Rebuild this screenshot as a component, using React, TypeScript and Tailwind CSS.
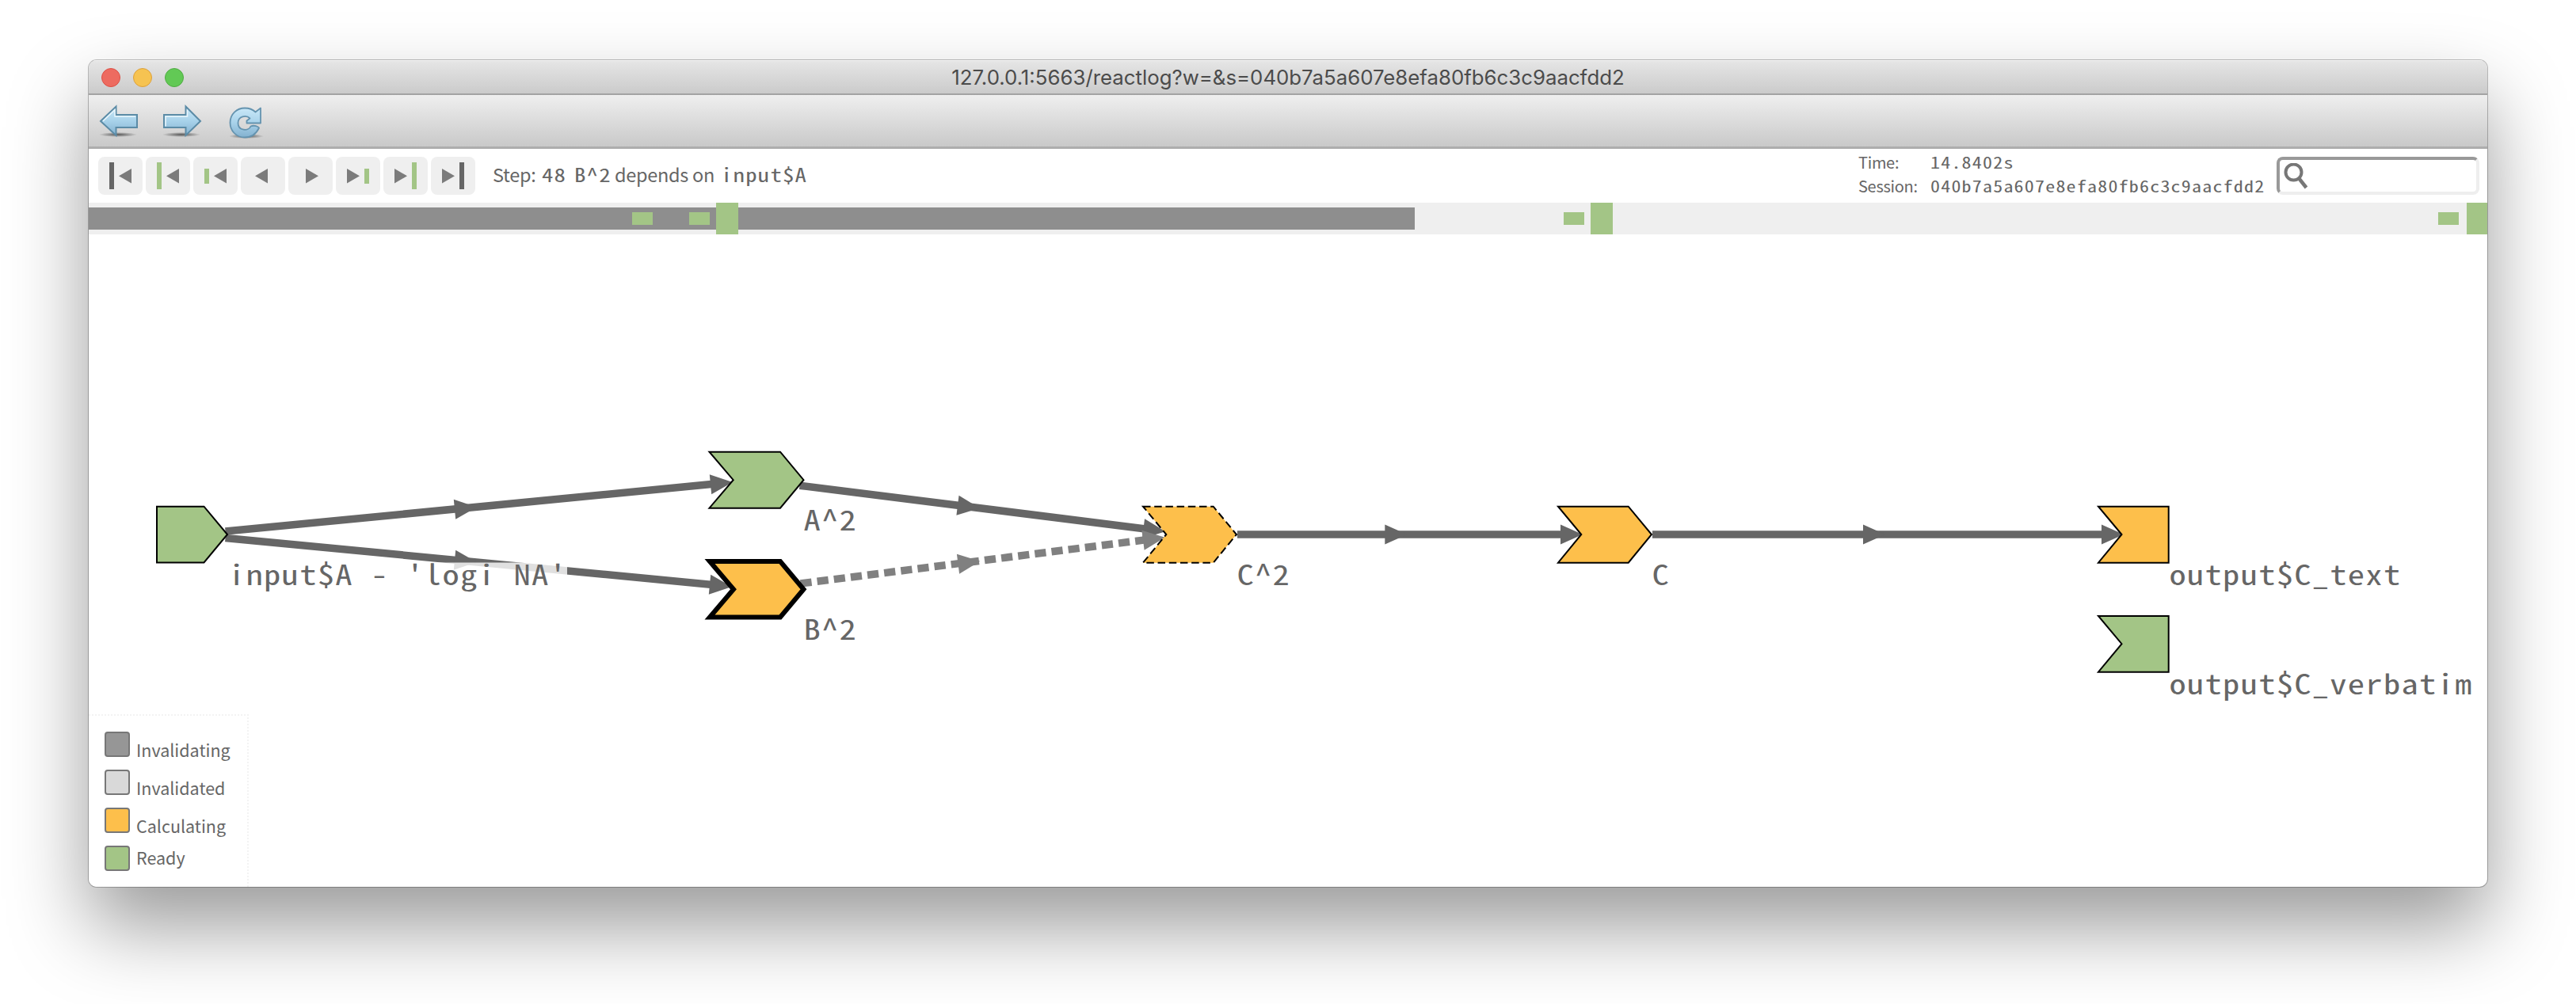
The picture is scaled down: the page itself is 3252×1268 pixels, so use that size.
import React from "react";

type Bar = { tall: boolean; color: string } | null;

const GREEN = "#a3c586";
const DARK = "#666666";

function StepButton({ dir, bar }: { dir: "back" | "forward"; bar: Bar }) {
  const tri = bar ? (dir === "back" ? 26 : 14) : dir === "back" ? 18 : 22;
  const points =
    dir === "back"
      ? `${tri + 16},15 ${tri + 16},33.5 ${tri},24.2`
      : `${tri},15 ${tri},33.5 ${tri + 16},24.2`;
  return (
    <button className="h-12 w-14 rounded-lg bg-[#efefef]">
      <svg viewBox="0 0 56 48" className="block h-12 w-14">
        {bar && (
          <rect
            x={dir === "back" ? 14 : 36}
            y={bar.tall ? 7 : 15}
            width="6"
            height={bar.tall ? 34 : 19}
            fill={bar.color}
          />
        )}
        <polygon points={points} fill="#7b7b7b" />
      </svg>
    </button>
  );
}

function NavIcons() {
  return (
    <svg width="240" height="65" viewBox="112 120 240 65" className="block">
      <defs>
        <linearGradient id="nav" x1="0" y1="0" x2="0" y2="1">
          <stop offset="0" stopColor="#c9e8f8" />
          <stop offset="0.5" stopColor="#a8d2ea" />
          <stop offset="1" stopColor="#83b1cf" />
        </linearGradient>
        <radialGradient id="ground">
          <stop offset="0" stopColor="#000" stopOpacity="0.6" />
          <stop offset="1" stopColor="#000" stopOpacity="0" />
        </radialGradient>
      </defs>
      <ellipse cx="149" cy="170" rx="24" ry="3" fill="url(#ground)" />
      <ellipse cx="229" cy="170" rx="24" ry="3" fill="url(#ground)" />
      <ellipse cx="311" cy="172" rx="22" ry="3" fill="url(#ground)" />
      <path d="M127 153L146.500 134.500V145H173V161H146.500V171Z" fill="url(#nav)" stroke="#5b8ba6" strokeWidth="2" />
      <path d="M130 153L145 138.500V147H171" fill="none" stroke="#eaf6fc" strokeWidth="1.500" />
      <path d="M253 153L234.500 134.500V145H207V161H234.500V171Z" fill="url(#nav)" stroke="#5b8ba6" strokeWidth="2" />
      <path d="M209 159.500V147H236.500V138.500" fill="none" stroke="#eaf6fc" strokeWidth="1.500" />
      <path
        d="M329 136.500V155.500H311.500V152.500L315.500 149.500C311 145 300.500 146.500 300.500 155.500C300.500 165.500 314 166 316.500 159.500C321 157.500 326 160 327 161.500C323 170 317 173.500 309 173.500C298 173.500 290.500 165 290.500 155C290.500 144 299 136.500 309 136.500C315 136.500 319 138 322.500 141.500Z"
        fill="url(#nav)"
        stroke="#6493af"
        strokeWidth="1.800"
        strokeLinejoin="round"
      />
    </svg>
  );
}

const TICKS = [
  { x: 686, big: false },
  { x: 758, big: false },
  { x: 792, big: true },
  { x: 1862, big: false },
  { x: 1896, big: true },
  { x: 2966, big: false },
  { x: 3002, big: true },
];

function Timeline() {
  return (
    <div className="relative h-10 w-full shrink-0 overflow-hidden bg-[#efefef] py-1.5">
      <div className="h-7 w-[1674px] bg-[#8e8e8e]" />
      {TICKS.map((t) => (
        <div
          key={t.x}
          className={t.big ? "absolute top-0 h-10 w-7 bg-[#a3c586]" : "absolute top-3 h-4 w-[26px] bg-[#a3c586]"}
          style={{ left: t.x }}
        />
      ))}
    </div>
  );
}

function Marker({ x, y, angle, color = DARK }: { x: number; y: number; angle: number; color?: string }) {
  return <polygon points="0,-12.600 28,0 0,12.600" fill={color} transform={`translate(${x} ${y}) rotate(${angle})`} />;
}

const EDGES = [
  { a: [284.5, 671], b: [903, 611.1], m: [574, 643.3], e: [897, 611.8], angle: -5.5 },
  { a: [284.5, 679.4], b: [902, 738.8], m: [574, 707.2], e: [896, 738.3], angle: 5.5 },
  { a: [1009.5, 613.2], b: [1450, 668.5], m: [1209, 638.3], e: [1443.5, 667.7], angle: 7.1 },
  { a: [1562, 675], b: [1975, 675], m: [1748.3, 675], e: [1970, 675], angle: 0 },
  { a: [2086, 675], b: [2660, 675], m: [2352, 675], e: [2653, 675], angle: 0 },
];

const LABELS = [
  { x: 288, y: 738.7, text: "input$A - 'logi NA'" },
  { x: 1014.5, y: 669.7, text: "A^2" },
  { x: 1014.5, y: 807.7, text: "B^2" },
  { x: 1561.5, y: 738.7, text: "C^2" },
  { x: 2085.5, y: 738.7, text: "C" },
  { x: 2738.5, y: 738.7, text: "output$C_text" },
  { x: 2738.5, y: 876.7, text: "output$C_verbatim" },
];

function Graph() {
  return (
    <svg viewBox="112 296 3028 824" className="block h-full w-full">
      {EDGES.map((e, i) => (
        <g key={i}>
          <line x1={e.a[0]} y1={e.a[1]} x2={e.b[0]} y2={e.b[1]} stroke={DARK} strokeWidth="9.500" />
          <Marker x={e.m[0]} y={e.m[1]} angle={e.angle} />
          <Marker x={e.e[0]} y={e.e[1]} angle={e.angle} />
        </g>
      ))}
      <line x1="1010.500" y1="737" x2="1450" y2="681.300" stroke="#808080" strokeWidth="9.500" strokeDasharray="14.200 7.100" />
      <Marker x={1209.5} y={712.2} angle={-7.2} color="#808080" />
      <Marker x={1443} y={682.2} angle={-7.2} color="#808080" />
      <g stroke="#000" strokeWidth="2">
        <path d="M198 639.700H257.500L287 675L257.500 710.500H198Z" fill={GREEN} />
        <path d="M895.500 570.700H985L1014.500 606.200L985 641.700H895.500L925.700 606.200Z" fill={GREEN} />
        <path d="M896 709H985L1014.500 744.200L985 779.500H896L926 744.200Z" fill="#fdbf4b" strokeWidth="6" />
        <path
          d="M1443 639.700H1531.700L1561 675L1531.700 710.700H1443L1472.300 675Z"
          fill="#fdbf4b"
          strokeDasharray="9.500 4.700"
        />
        <path d="M1967 639.700H2055.700L2085 675L2055.700 710.700H1967L1996.300 675Z" fill="#fdbf4b" />
        <path d="M2649 639.700H2737.700V710.700H2649L2678.500 675Z" fill="#fdbf4b" />
        <path d="M2649 778H2737.700V848.700H2649L2678.500 813.200Z" fill={GREEN} />
      </g>
      <rect x="287" y="710.500" width="429" height="42" fill="#fff" fillOpacity="0.8" />
      <g
        className="font-['Noto_Sans_Mono_CJK_SC','Liberation_Mono',monospace] text-[35.5px] tracking-[1.03px]"
        fill={DARK}
      >
        {LABELS.map((l) => (
          <text key={l.text} transform={`translate(${l.x} ${l.y}) scale(1.2 1)`}>
            {l.text}
          </text>
        ))}
      </g>
    </svg>
  );
}

const LEGEND = [
  { label: "Invalidating", swatch: "bg-[#969696]", shift: "mt-[7px]" },
  { label: "Invalidated", swatch: "bg-[#d9d9d9]", shift: "mt-[7px]" },
  { label: "Calculating", swatch: "bg-[#fdbf4b]", shift: "mt-[7px]" },
  { label: "Ready", swatch: "bg-[#a3c586]", shift: "-mt-px" },
];

function Legend() {
  return (
    <div className="absolute bottom-0 left-0 flex h-[218px] w-[202px] flex-col gap-4 rounded-bl-lg border-t-2 border-r-2 border-dotted border-[#f3f3f3] bg-white pt-5 pl-5">
      {LEGEND.map((l) => (
        <div key={l.label} className="flex h-8 gap-2">
          <div className={`size-8 shrink-0 rounded-[4px] border-2 border-[#777] ${l.swatch}`} />
          <span className={`text-[21.5px] leading-8 ${l.shift}`}>{l.label}</span>
        </div>
      ))}
    </div>
  );
}

function Code({ children, className = "" }: { children: string; className?: string }) {
  return (
    <span className={className}>
      <span className="inline-block origin-left scale-x-120 font-['Noto_Sans_Mono_CJK_SC','Liberation_Mono',monospace] tracking-[1px] whitespace-pre">
        {children}
      </span>
    </span>
  );
}

export default function App() {
  return (
    <div className="flex h-[1268px] w-[3252px] overflow-hidden bg-white px-28 pt-[76px] font-['Noto_Sans_CJK_SC','Open_Sans',sans-serif] text-[#666]">
      <div className="flex h-[1044px] w-[3028px] flex-col overflow-hidden rounded-[10px] bg-white shadow-[0_0_0_1px_rgba(0,0,0,0.25),0_50px_100px_rgba(0,0,0,0.4)]">
        <div className="flex h-11 shrink-0 items-center border-b-2 border-[#a3a3a3] bg-linear-to-b from-[#e6e6e6] to-[#cbcbcb] pl-4 shadow-[inset_0_1px_0_#f6f6f6]">
          <div className="mt-0.5 flex w-[104px] gap-4">
            <div className="size-6 rounded-full border border-[#dc5046] bg-[#ed6b60]" />
            <div className="size-6 rounded-full border border-[#dca03c] bg-[#f6c351]" />
            <div className="size-6 rounded-full border border-[#4fab42] bg-[#62c955]" />
          </div>
          <h1 className="mt-0.5 mr-[120px] grow text-center font-['Inter',sans-serif] text-[25.8px] leading-10 text-[#4b4b4b]">
            127.0.0.1:5663/reactlog?w=&amp;s=040b7a5a607e8efa80fb6c3c9aacfdd2
          </h1>
        </div>
        <div className="h-[68px] shrink-0 border-b-3 border-[#adadad] bg-linear-to-b from-[#efefef] to-[#c9c9c9]">
          <NavIcons />
        </div>
        <div className="flex h-[68px] shrink-0 items-start bg-white pt-2.5 pr-2.5 pl-3">
          <div className="flex gap-1">
            <StepButton dir="back" bar={{ tall: true, color: DARK }} />
            <StepButton dir="back" bar={{ tall: true, color: GREEN }} />
            <StepButton dir="back" bar={{ tall: false, color: GREEN }} />
            <StepButton dir="back" bar={null} />
            <StepButton dir="forward" bar={null} />
            <StepButton dir="forward" bar={{ tall: false, color: GREEN }} />
            <StepButton dir="forward" bar={{ tall: true, color: GREEN }} />
            <StepButton dir="forward" bar={{ tall: true, color: DARK }} />
          </div>
          <div className="ml-[22px] flex text-[24px] leading-[44px]">
            <span className="w-[62px] text-[23.5px] tracking-[-0.3px]">Step:</span>
            <Code className="w-[41px]">48</Code>
            <Code className="w-[51px]">B^2</Code>
            <span className="w-[134px] text-[23.5px] tracking-[-0.3px]">depends on</span>
            <Code>input$A</Code>
          </div>
          <div className="-mt-2 mr-4 ml-auto grid grid-cols-[91px_421px] text-[20px] leading-[30px]">
            <span className="tracking-[-0.3px]">Time:</span>
            <Code>14.8402s</Code>
            <span className="tracking-[-0.3px]">Session:</span>
            <Code>040b7a5a607e8efa80fb6c3c9aacfdd2</Code>
          </div>
          <div className="h-12 w-64 rounded-lg border-4 border-t-[#999] border-r-[#eee] border-b-[#eee] border-l-[#999] bg-white">
            <svg viewBox="0 0 36 36" className="mt-1 ml-1 size-9">
              <circle cx="13.500" cy="11.500" r="10" fill="none" stroke="#777" strokeWidth="4" />
              <path d="M20 19L29.500 31" stroke="#777" strokeWidth="4.500" />
            </svg>
          </div>
        </div>
        <Timeline />
        <div className="relative min-h-0 grow">
          <Graph />
          <Legend />
        </div>
      </div>
    </div>
  );
}
